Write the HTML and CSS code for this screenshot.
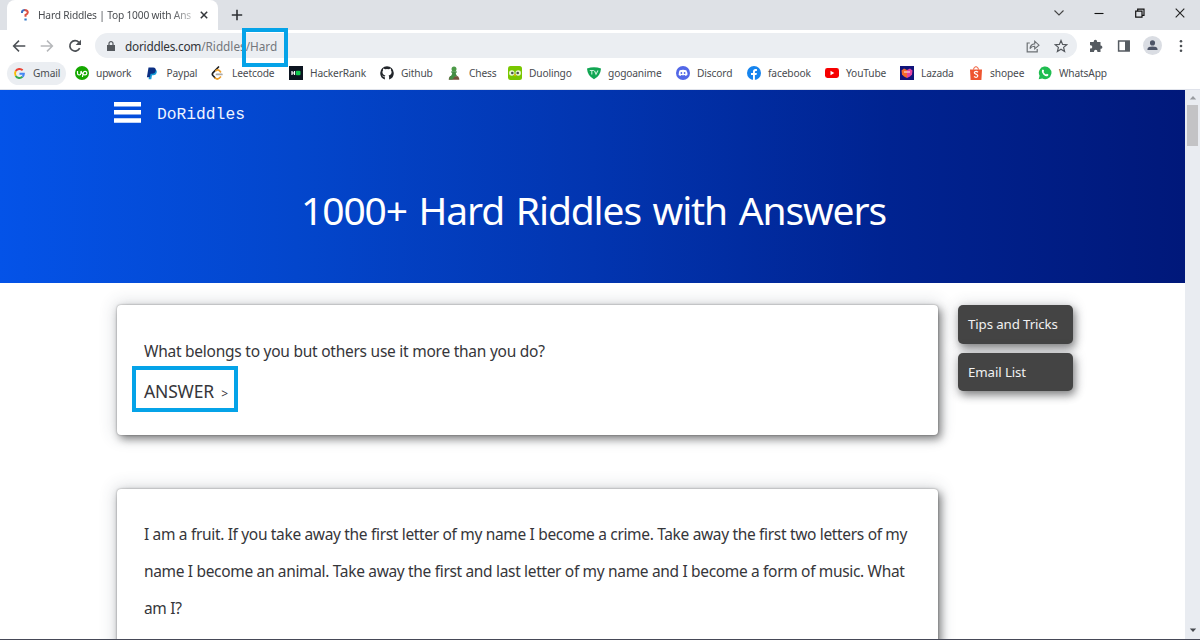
FILE: index.html
```
<!DOCTYPE html>
<html lang="en">
<head>
<meta charset="utf-8">
<title>Hard Riddles | Top 1000 with Answers</title>
<link rel="stylesheet" href="styles.css">
</head>
<body>
<div class="browser">
  <header class="tabstrip">
    <div class="tab">
      <svg class="favicon" viewBox="0 0 14 14"><path d="M4 5V3.800Q4.300 2 7 2" fill="none" stroke="#3d6fc2" stroke-width="2"/><path d="M6.500 2Q9.800 2 9.800 4.600Q9.800 6 7.500 7V8.800" fill="none" stroke="#dc5245" stroke-width="2"/><path d="M6.400 10.500h2.300v2H6.400z" fill="#3279c9"/></svg>
      <span class="tab-title">Hard Riddles | Top 1000 with Ans</span>
      <svg class="tab-close" viewBox="0 0 8 8"><path d="M.8.8l6.400 6.400M7.200.8L.8 7.200" stroke="#33363a" stroke-width="1.500"/></svg>
    </div>
    <svg class="new-tab" viewBox="0 0 12 12"><path d="M6 .8v10.400M.8 6h10.400" stroke="#2e3135" stroke-width="1.600"/></svg>
    <div class="window-controls">
      <svg viewBox="0 0 12 12"><path d="M1.500 3.500L6 8l4.500-4.500" fill="none" stroke="#444" stroke-width="1.100"/></svg>
      <svg viewBox="0 0 12 12"><path d="M1.500 6.500h9" stroke="#111" stroke-width="1.100"/></svg>
      <svg viewBox="0 0 12 12"><path d="M1.700 4.200h6.300v6H1.700zM3.700 4V2.200h6.300v6.100H8.200" fill="none" stroke="#111" stroke-width="1.200"/></svg>
      <svg viewBox="0 0 12 12"><path d="M1.700 1.700l8.600 8.600M10.300 1.700l-8.600 8.600" stroke="#222" stroke-width="1.100"/></svg>
    </div>
  </header>

  <div class="toolbar">
    <svg class="nav back" viewBox="0 0 14 14"><path d="M13.300 7H1.600M7 1.600L1.600 7 7 12.400" fill="none" stroke="#4c5055" stroke-width="1.500"/></svg>
    <svg class="nav" viewBox="0 0 14 14"><path d="M.7 7h11.700M7 1.600L12.400 7 7 12.400" fill="none" stroke="#b6b8bb" stroke-width="1.500"/></svg>
    <svg class="nav" viewBox="0 0 14 14"><path d="M11.700 9.200A5.200 5.200 0 1 1 10.900 3.300" fill="none" stroke="#4c5055" stroke-width="1.700"/><path d="M13 .8v5.300H7.700z" fill="#4c5055"/></svg>
    <div class="omnibox">
      <svg class="lock" viewBox="0 0 8 10"><path d="M0 4h8v6H0z" fill="#55595e"/><path d="M2 4V2.600a2 2 0 0 1 4 0V4" fill="none" stroke="#55595e" stroke-width="1.200"/></svg>
      <span class="url"><span class="host">doriddles.com</span>/Riddles<span class="marked">/Hard</span></span>
      <svg class="share" viewBox="0 0 14 14"><path d="M3.800 4H1.200v8.800h10V10" fill="none" stroke="#6c7074" stroke-width="1.200"/><path d="M4 9.600Q4.400 5.200 8.700 4.900V2.200l4.300 4-4.300 3.700V7.300Q5.500 7.200 4 9.600z" fill="none" stroke="#6c7074" stroke-width="1.100"/></svg>
      <svg class="star" viewBox="0 0 14 14"><path d="M7 1.500l1.600 3.900 4.200.3-3.200 2.700 1 4.100L7 10.300l-3.600 2.200 1-4.100L1.200 5.700l4.200-.3z" fill="none" stroke="#55595e" stroke-width="1.200"/></svg>
    </div>
    <svg class="puzzle" viewBox="0 0 14 14"><path d="M1 3h3.700V2.500a1.700 1.700 0 0 1 3.400 0V3h3.400v3.600h.3a1.600 1.600 0 0 1 0 3.200h-.3V13H8.400v-.5a1.700 1.700 0 0 0-3.400 0v.5H1V9.600h.6a1.700 1.700 0 0 0 0-3.400H1z" fill="#555b61"/></svg>
    <svg class="panel" viewBox="0 0 14 14"><path d="M1.600 2h10.600v10H1.600z" fill="none" stroke="#555b61" stroke-width="1.500"/><path d="M8 2h4.500v10H8z" fill="#555b61"/></svg>
    <svg class="avatar" viewBox="0 0 20 20"><circle cx="10" cy="10" r="10" fill="#dadde3"/><circle cx="10" cy="7.300" r="2.700" fill="#4d5467"/><path d="M4.700 14.800v-1.200Q5 11 10 11t5.300 2.600v1.200z" fill="#4d5467"/></svg>
    <svg class="kebab" viewBox="0 0 4 14"><g fill="#4c5055"><circle cx="2" cy="2.300" r="1.300"/><circle cx="2" cy="7" r="1.300"/><circle cx="2" cy="11.700" r="1.300"/></g></svg>
  </div>

  <nav class="bookmarks">
    <a class="bookmark active"><svg viewBox="0 0 14 14"><g fill="none" stroke-width="2.100"><path d="M2.900 4.400A4.900 4.900 0 0 1 10.400 3.500" stroke="#ea4335"/><path d="M2.900 4.400a4.900 4.900 0 0 0 0 5.200" stroke="#fbbc05"/><path d="M2.900 9.600a4.900 4.900 0 0 0 7.300 1" stroke="#34a853"/><path d="M10.200 10.600A4.500 4.500 0 0 0 11.700 7.300H7" stroke="#4285f4"/></g></svg><span>Gmail</span></a>
    <a class="bookmark"><svg viewBox="0 0 14 14"><circle cx="7" cy="7" r="7" fill="#15a800"/><path d="M2.500 5v2.300a1.700 1.700 0 0 0 3.400 0V5.200M6 5Q7 7.500 8 8.500M7.400 11L8.300 6.700a1.800 1.800 0 1 1 1.700 2.200Q8.900 9 8 7.800" fill="none" stroke="#fff" stroke-width="1.200"/></svg><span>upwork</span></a>
    <a class="bookmark"><svg viewBox="0 0 14 14"><path d="M4 4h6.200q1 1 .4 3-.8 2.300-3.300 2.300H6l-.7 3.900H2.600z" fill="#169bd7"/><path d="M2.500 1.500h4.700q3 .3 2.600 3Q9.200 7.800 6.200 7.800H4.600L3.900 11.300H.9z" fill="#0b2f83"/></svg><span>Paypal</span></a>
    <a class="bookmark"><svg viewBox="0 0 14 14"><g fill="none" stroke-linecap="round" stroke-width="1.700"><path d="M7.500 1L1.900 6.800Q.8 8.200 1.900 9.500L4.200 12" stroke="#222"/><path d="M4.200 12q2 1.900 4 .2L9.500 11M9.500 5.800L8.200 4.500Q6.500 3.300 5 4.700" stroke="#efa02c"/><path d="M5.500 8.400h5.400" stroke="#aaa"/></g></svg><span>Leetcode</span></a>
    <a class="bookmark"><svg viewBox="0 0 14 14"><path d="M0 0h14v14H0z" fill="#0c1420"/><path d="M3 5v4M5.500 5v4M3 7h2.500" stroke="#fff" stroke-width="1.200"/><rect x="6.800" y="4.800" width="4.700" height="4.500" rx="1" fill="#10c94f"/></svg><span>HackerRank</span></a>
    <a class="bookmark"><svg viewBox="0 0 14 14"><path d="M4.900 13.600Q.2 12 .2 7a6.800 6.800 0 0 1 13.600 0q0 5-4.700 6.600v-2.700q0-1-.5-1.500 3-.4 3-3.300 0-1.100-.7-1.900.3-1-.1-1.800-.8 0-1.900.8a7 7 0 0 0-3.800 0Q4 2.300 3.200 2.400q-.4.800-.1 1.800-.7.800-.7 1.900 0 2.900 3 3.300-.5.500-.5 1.100-1.200.4-2-.8l-.8-.5q.8 2.300 2.800 2z" fill="#22262b"/></svg><span>Github</span></a>
    <a class="bookmark"><svg viewBox="0 0 14 14"><circle cx="6" cy="3" r="2.500" fill="#4c9a48"/><path d="M3.300 5.300h5.400v1.500h-1q.2 2.400 2 3.800H2.300q1.800-1.400 2-3.800h-1z" fill="#438d43"/><path d="M2 10.200h8q1.500 1.500 1.300 3.600H.7Q.5 11.700 2 10.200z" fill="#76513d"/><path d="M2.300 10h5l-3 3.500H1.100Q1 11.500 2.300 10z" fill="#438d43"/></svg><span>Chess</span></a>
    <a class="bookmark"><svg viewBox="0 0 14 14"><rect width="14" height="14" rx="2.500" fill="#79c700"/><circle cx="3.800" cy="7" r="2.700" fill="#e9f7d4"/><circle cx="10.200" cy="7" r="2.700" fill="#e9f7d4"/><circle cx="4.300" cy="7" r="1.300" fill="#49544a"/><circle cx="9.700" cy="7" r="1.300" fill="#49544a"/><path d="M5.700 8.500h2.600L7 10.500z" fill="#ffb000"/></svg><span>Duolingo</span></a>
    <a class="bookmark"><svg viewBox="0 0 14 14"><path d="M0 2.500Q7-.2 14 2.500 13.500 10 7 13.200.5 10 0 2.500z" fill="#11a653"/><path d="M2.800 4.500h4M4.800 4.500v4M7.500 4.700L9 8.300l2-3.800" fill="none" stroke="#c9f1d7" stroke-width="1.100"/></svg><span>gogoanime</span></a>
    <a class="bookmark"><svg viewBox="0 0 14 14"><circle cx="7" cy="7" r="7" fill="#5267e7"/><path d="M3.700 4.300Q7 3.200 10.300 4.300q1.300 2.200 1.100 4.600L9.600 10l-.8-1Q7 9.500 5.200 9l-.8 1-1.800-1.100Q2.500 6.200 3.700 4.300z" fill="#fff"/><circle cx="5.400" cy="7" r=".9" fill="#5267e7"/><circle cx="8.600" cy="7" r=".9" fill="#5267e7"/></svg><span>Discord</span></a>
    <a class="bookmark"><svg viewBox="0 0 14 14"><circle cx="7" cy="7" r="7" fill="#1684ee"/><path d="M6 14V9H4V7h2V5.500Q6 3 8.500 3h1.400v1.900H8.800q-.9 0-.9 1V7h2l-.4 2H7.900v5z" fill="#fff"/></svg><span>facebook</span></a>
    <a class="bookmark"><svg viewBox="0 0 14 14"><rect y="2" width="14" height="10" rx="2.400" fill="#f60000"/><path d="M5.500 4.800v4.400L9.300 7z" fill="#fff"/></svg><span>YouTube</span></a>
    <a class="bookmark"><svg viewBox="0 0 14 14"><path d="M0 0h14v14H0z" fill="#10137a"/><path d="M1.500 4.500L4 2.500l3 1.400V12Q3.500 10.500 2 8.500z" fill="#f56b2b"/><path d="M12.500 4.500L10 2.500 7 3.900V12q3.500-1.500 5-3.500z" fill="#e345a0"/><path d="M4 6h6" stroke="#f8d8e0" stroke-width="1.200"/></svg><span>Lazada</span></a>
    <a class="bookmark"><svg viewBox="0 0 14 14"><path d="M1 3.500h12l-.6 10.500H1.600z" fill="#ee5530"/><path d="M4.500 3.500Q4.800.7 7 .7t2.500 2.800" fill="none" stroke="#ee5530"/><path d="M9 6.300Q7.500 5 6 5.700q-1.500 1.200.5 2.200Q9.500 9 8.500 10.600 7 12 5 10.600" fill="none" stroke="#fff" stroke-width="1.200"/></svg><span>shopee</span></a>
    <a class="bookmark"><svg viewBox="0 0 14 14"><path d="M.7 13.300l.9-3.500A6.300 6.300 0 1 1 4.200 12.400z" fill="#1fbd50"/><path d="M4 4q1-1.200 1.700.1l.4 1-.6.9Q6.400 7.600 8 8.400l.9-.7 1.500.8q.2 1.300-1.200 1.800-1.700.3-3.900-1.900T4 4z" fill="#fff"/></svg><span>WhatsApp</span></a>
  </nav>

  <div class="viewport">
    <main class="page">
      <section class="hero">
        <div class="brand">
          <svg class="menu" viewBox="0 0 27 21"><path d="M0 2.200h27M0 10.300h27M0 18.500h27" stroke="#fff" stroke-width="4.400"/></svg>
          <span>DoRiddles</span>
        </div>
        <h1>1000+ Hard Riddles with Answers</h1>
      </section>
      <div class="content">
        <div class="riddles">
          <article class="card">
            <p class="short">What belongs to you but others use it more than you do?</p>
            <div class="answer">ANSWER <span>&gt;</span></div>
          </article>
          <article class="card tall">
            <p>I am a fruit. If you take away the first letter of my name I become a crime. Take away the first two letters of my<br>name I become an animal. Take away the first and last letter of my name and I become a form of music. What<br>am I?</p>
          </article>
        </div>
        <aside class="links">
          <a>Tips and Tricks</a>
          <a>Email List</a>
        </aside>
      </div>
    </main>
    <div class="scrollbar">
      <svg viewBox="0 0 8 5"><path d="M.8 4.500L4 1l3.200 3.500z" fill="#999ca0"/></svg>
      <div class="thumb"></div>
      <svg class="down" viewBox="0 0 8 5"><path d="M.8.500L4 4 7.200.500z" fill="#484b50"/></svg>
    </div>
  </div>
</div>
</body>
</html>
```
FILE: styles.css
```
*, *::after { box-sizing: border-box; }
body { margin: 0; font-family: "Noto Sans", "Open Sans", sans-serif; color: #36363a; background: #fff; }
svg { display: block; flex: none; }
.browser { width: 1200px; height: 640px; display: flex; flex-direction: column; overflow: hidden; border-bottom: 1px solid #464957; }

.tabstrip { height: 30px; flex: none; display: flex; align-items: center; background: #dee1e6; padding-left: 7px; }
.tab { width: 211px; height: 30px; display: flex; align-items: center; background: #fff; border-radius: 8px 8px 0 0; padding-left: 11px; }
.favicon { width: 14px; height: 14px; }
.tab-title { width: 155px; margin-left: 6px; font-size: 10.2px; letter-spacing: -.18px; white-space: nowrap; overflow: hidden; color: #494c50; -webkit-mask-image: linear-gradient(90deg, #000 132px, rgba(0,0,0,.3) 154px); mask-image: linear-gradient(90deg, #000 132px, rgba(0,0,0,.3) 154px); }
.tab-close { width: 8px; height: 8px; margin-left: 7px; }
.new-tab { width: 12px; height: 12px; margin-left: 13px; }
.window-controls { display: flex; gap: 28.500px; margin: -4px 14px 0 auto; }
.window-controls svg { width: 12px; height: 12px; }

.toolbar { height: 31px; flex: none; display: flex; align-items: center; padding-left: 12px; }
.nav { width: 14px; height: 14px; margin-right: 14px; }
.omnibox { width: 982px; height: 25px; margin-left: -1px; display: flex; align-items: center; border-radius: 13px; background: #ebeef2; padding: 0 9px 0 12px; }
.lock { width: 8px; height: 10px; }
.url { position: relative; margin-left: 10px; font-size: 11.800px; letter-spacing: -.02px; color: #74777c; white-space: nowrap; }
.host { color: #303338; letter-spacing: -.23px; }
.marked::after { content: ""; position: absolute; right: -11px; top: -10px; width: 46px; height: 39px; border: 4px solid #05a3e8; }
.share { width: 14px; height: 14px; margin-left: auto; }
.star { width: 14px; height: 14px; margin-left: 14px; }
.puzzle { width: 14px; height: 14px; margin-left: 12px; }
.panel { width: 14px; height: 14px; margin-left: 14px; }
.avatar { width: 19px; height: 19px; margin-left: 12px; }
.kebab { width: 4px; height: 14px; margin-left: 17px; }

.bookmarks { height: 29px; flex: none; display: grid; grid-template-columns: 62px 70.500px 65.500px 78px 91px 68px 60px 79px 89px 71px 78px 75px 69px 69px 80px; align-items: center; padding: 0 0 4px 13px; border-bottom: 1px solid #dfe2ea; }
.bookmark { position: relative; display: flex; align-items: center; gap: 7px; font-size: 10.2px; line-height: 23px; letter-spacing: -.14px; color: #484b50; white-space: nowrap; }
.bookmark svg { width: 14px; height: 14px; }
.bookmark.active { margin: 0 9px 0 -6px; padding-left: 6px; border-radius: 12px; background: #ebeef2; }
.bookmark.active svg { width: 13px; height: 13px; }

.viewport { flex: 1; min-height: 0; display: flex; }
.page { width: 1185px; overflow: hidden; }
.hero { height: 192.500px; overflow: hidden; text-align: center; color: #fff; background: linear-gradient(90deg, #0453e8 0%, #0346cc 25%, #0235b0 50%, #002391 75%, #00187a 100%); }
.brand { display: flex; align-items: center; gap: 16px; margin: 11px 0 0 114px; height: 22px; font: 16.290px "Liberation Mono", monospace; color: #eef4ff; }
.brand span { padding-top: 4px; }
.menu { width: 27px; height: 21px; }
h1 { margin: 58px 0 0; padding-left: 2px; font-size: 39px; line-height: 58px; font-weight: 400; letter-spacing: -1.120px; word-spacing: 2.600px; }
.content { display: flex; gap: 20px; padding: 22.500px 0 0 117px; }
.riddles { width: 821px; display: flex; flex-direction: column; gap: 54px; }
.card { height: 130px; border-radius: 4px; background: #fff; padding: 27px; box-shadow: 0 0 2px rgba(0,0,0,.4), 3px 4px 9px rgba(0,0,0,.45), 0 0 16px 3px rgba(50,60,80,.16); }
.card.tall { height: 300px; }
.card p { margin: 0; font-size: 15.500px; line-height: 37px; letter-spacing: -.333px; white-space: nowrap; }
.card p.short { letter-spacing: -.25px; padding-top: 1px; }
.answer { position: relative; margin-top: 3px; line-height: 37px; font-size: 17.500px; letter-spacing: -.17px; }
.answer span { font-size: 12px; margin-left: 3px; }
.answer::after { content: ""; position: absolute; left: -12px; top: -7px; width: 106px; height: 46px; border: 4px solid #05a3e8; }
.links { width: 115px; display: flex; flex-direction: column; gap: 9px; }
.links a { height: 38.500px; border-radius: 5px; background: #444; color: #f1f1f1; padding-left: 10px; font-size: 13.300px; line-height: 38px; letter-spacing: -.12px; white-space: nowrap; box-shadow: 2px 4px 9px rgba(0,0,0,.45), 0 0 14px 2px rgba(50,60,80,.14); }

.scrollbar { width: 15px; display: flex; flex-direction: column; align-items: center; background: #e9ecf1; padding: 5px 0 6px; }
.scrollbar svg { width: 8px; height: 5px; }
.thumb { width: 11px; height: 41px; margin-top: 5px; background: #c3c3c5; }
.down { margin-top: auto; }
```
